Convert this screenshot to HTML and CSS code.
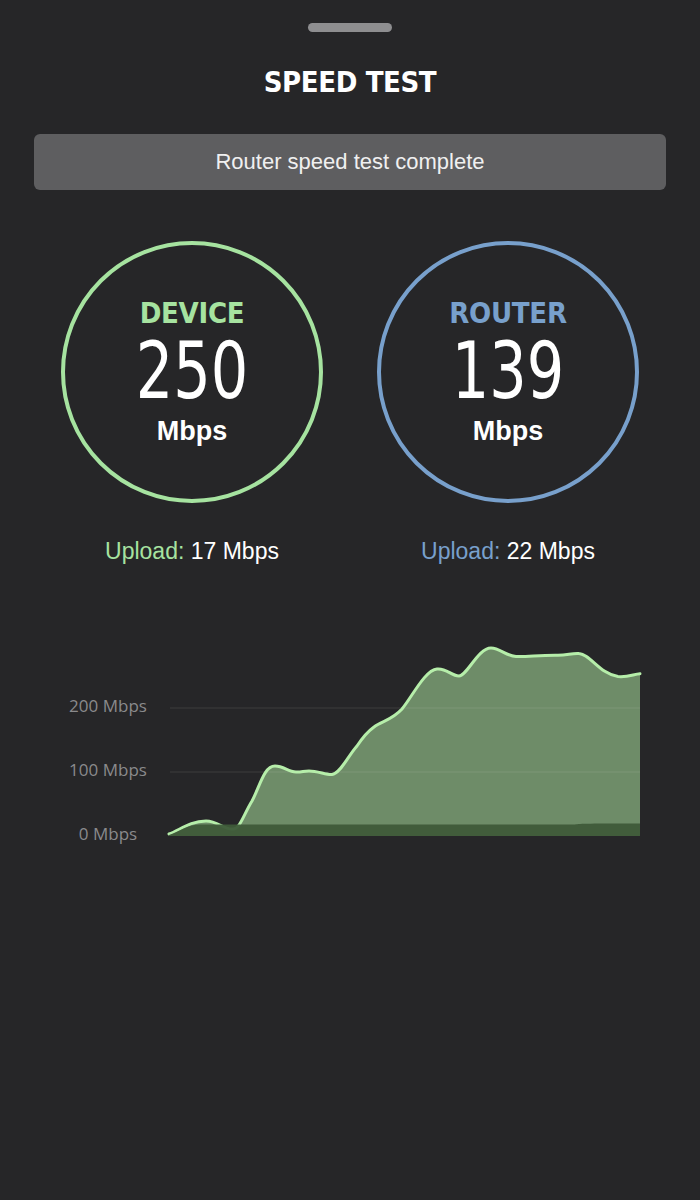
FILE: index.html
```html
<!DOCTYPE html>
<html lang="en">
    <head>
        <meta charset="UTF-8">
        <meta name="viewport" content="width=device-width, initial-scale=1.0">
        <title>Speed Test</title>
        <link rel="stylesheet" href="styles.css">
    </head>
    <body>
        <div class="sheet">
            <div class="handle"></div>
            <h1 class="title">SPEED TEST</h1>
            <div class="banner">Router speed test complete</div>

            <div class="gauges">
                <div class="gauge device">
                    <div class="ring">
                        <div class="ring-label">DEVICE</div>
                        <div class="ring-value">250</div>
                        <div class="ring-unit">Mbps</div>
                    </div>
                    <div class="upload"><span class="upload-key">Upload:</span> 17 Mbps</div>
                </div>
                <div class="gauge router">
                    <div class="ring">
                        <div class="ring-label">ROUTER</div>
                        <div class="ring-value">139</div>
                        <div class="ring-unit">Mbps</div>
                    </div>
                    <div class="upload"><span class="upload-key">Upload:</span> 22 Mbps</div>
                </div>
            </div>

            <svg class="chart" viewBox="0 0 700 250" width="700" height="250">
                <text class="axis" x="108" y="111">200 Mbps</text>
                <text class="axis" x="108" y="175">100 Mbps</text>
                <text class="axis" x="108" y="239">0 Mbps</text>

                <path class="download-fill" d="M169 233 C180 229, 190 220, 206 220 C218 220, 224 229, 233 228 C240 228, 244 213, 252 200 C260 185, 264 165, 275 165 C284 165, 288 171, 296 171 C304 171, 302 170, 309 170 C318 170, 326 174, 332 173.5 C340 173, 348 155, 357 145 C363 136, 367 131, 374 126 C382 120, 392 119, 402 108 C412 96, 425 69, 437 68 C447 67, 451 75, 459 75 C467 75, 478 47, 491 47 C500 47, 506 55, 516 55.5 C527 56, 540 54, 558 54.3 C568 54, 572 52, 579 52.5 C590 53, 600 73, 618 75.5 C628 76.5, 634 73, 640 72.7 L640 235 L169 235 Z"/>

                <line class="grid" x1="170" y1="107" x2="640" y2="107"/>
                <line class="grid" x1="170" y1="171" x2="640" y2="171"/>

                <path class="download-line" d="M169 233 C180 229, 190 220, 206 220 C218 220, 224 229, 233 228 C240 228, 244 213, 252 200 C260 185, 264 165, 275 165 C284 165, 288 171, 296 171 C304 171, 302 170, 309 170 C318 170, 326 174, 332 173.5 C340 173, 348 155, 357 145 C363 136, 367 131, 374 126 C382 120, 392 119, 402 108 C412 96, 425 69, 437 68 C447 67, 451 75, 459 75 C467 75, 478 47, 491 47 C500 47, 506 55, 516 55.5 C527 56, 540 54, 558 54.3 C568 54, 572 52, 579 52.5 C590 53, 600 73, 618 75.5 C628 76.5, 634 73, 640 72.7"/>

                <path class="upload-fill" d="M169 234 C180 230, 188 223.5, 200 223.5 L575 223.5 C580 222.5, 590 222.5, 640 222.5 L640 235 L169 235 Z"/>
            </svg>
        </div>
    </body>
</html>
```

FILE: styles.css
```css
body {
    margin: 0;
    background-color: #262628;
    color: #fff;
    font-family: "Liberation Sans", Arial, sans-serif;
}
.sheet {
    width: 700px;
    height: 1200px;
    padding: 0 34px;
    box-sizing: border-box;
    overflow: hidden;
}
.handle {
    width: 84px;
    height: 9px;
    margin: 23px auto 0;
    border-radius: 5px;
    background-color: #8e8e90;
}
.title {
    margin: 34px 0 0;
    font-family: "DejaVu Sans Condensed", "DejaVu Sans", sans-serif;
    font-stretch: condensed;
    font-size: 29px;
    line-height: 32px;
    font-weight: bold;
    letter-spacing: -0.4px;
    text-align: center;
}
.banner {
    margin-top: 36px;
    height: 56px;
    display: flex;
    align-items: center;
    justify-content: center;
    border-radius: 6px;
    background-color: #5e5e60;
    color: #f0f0f0;
    font-size: 22px;
}
.gauges {
    margin-top: 51px;
    display: grid;
    grid-template-columns: 1fr 1fr;
}
.gauge {
    display: flex;
    flex-direction: column;
    align-items: center;
}
.ring {
    width: 262px;
    height: 262px;
    box-sizing: border-box;
    border: 4px solid;
    border-radius: 50%;
    display: flex;
    flex-direction: column;
    align-items: center;
    justify-content: center;
}
.device .ring { border-color: #a6e3a0; }
.router .ring { border-color: #78a0cc; }
.ring-label {
    font-family: "DejaVu Sans Condensed", "DejaVu Sans", sans-serif;
    font-stretch: condensed;
    font-size: 29px;
    line-height: 30px;
    font-weight: bold;
    letter-spacing: -0.3px;
}
.device .ring-label { color: #a6e3a0; }
.router .ring-label { color: #78a0cc; }
.ring-value {
    margin-top: 10px;
    font-family: "DejaVu Sans Condensed", "DejaVu Sans", sans-serif;
    font-stretch: condensed;
    font-size: 78px;
    line-height: 66px;
    transform: scaleX(0.84);
}
.ring-unit {
    margin-top: 12px;
    font-size: 27px;
    line-height: 30px;
    font-weight: bold;
}
.upload {
    margin-top: 34px;
    font-size: 23px;
    line-height: 28px;
}
.device .upload-key { color: #a6e3a0; }
.router .upload-key { color: #78a0cc; }
.chart {
    display: block;
    margin: 36px 0 0 -34px;
}
.axis {
    font-family: "Open Sans", sans-serif;
    font-size: 17px;
    fill: #8a8a8c;
    text-anchor: middle;
}
.grid {
    stroke: rgba(255, 255, 255, 0.1);
    stroke-width: 1;
}
.download-fill {
    fill: #6e8c68;
}
.download-line {
    fill: none;
    stroke: #b6eeaa;
    stroke-width: 3;
    stroke-linejoin: round;
    stroke-linecap: round;
}
.upload-fill {
    fill: #3e5a39;
    opacity: 0.95;
}
```
